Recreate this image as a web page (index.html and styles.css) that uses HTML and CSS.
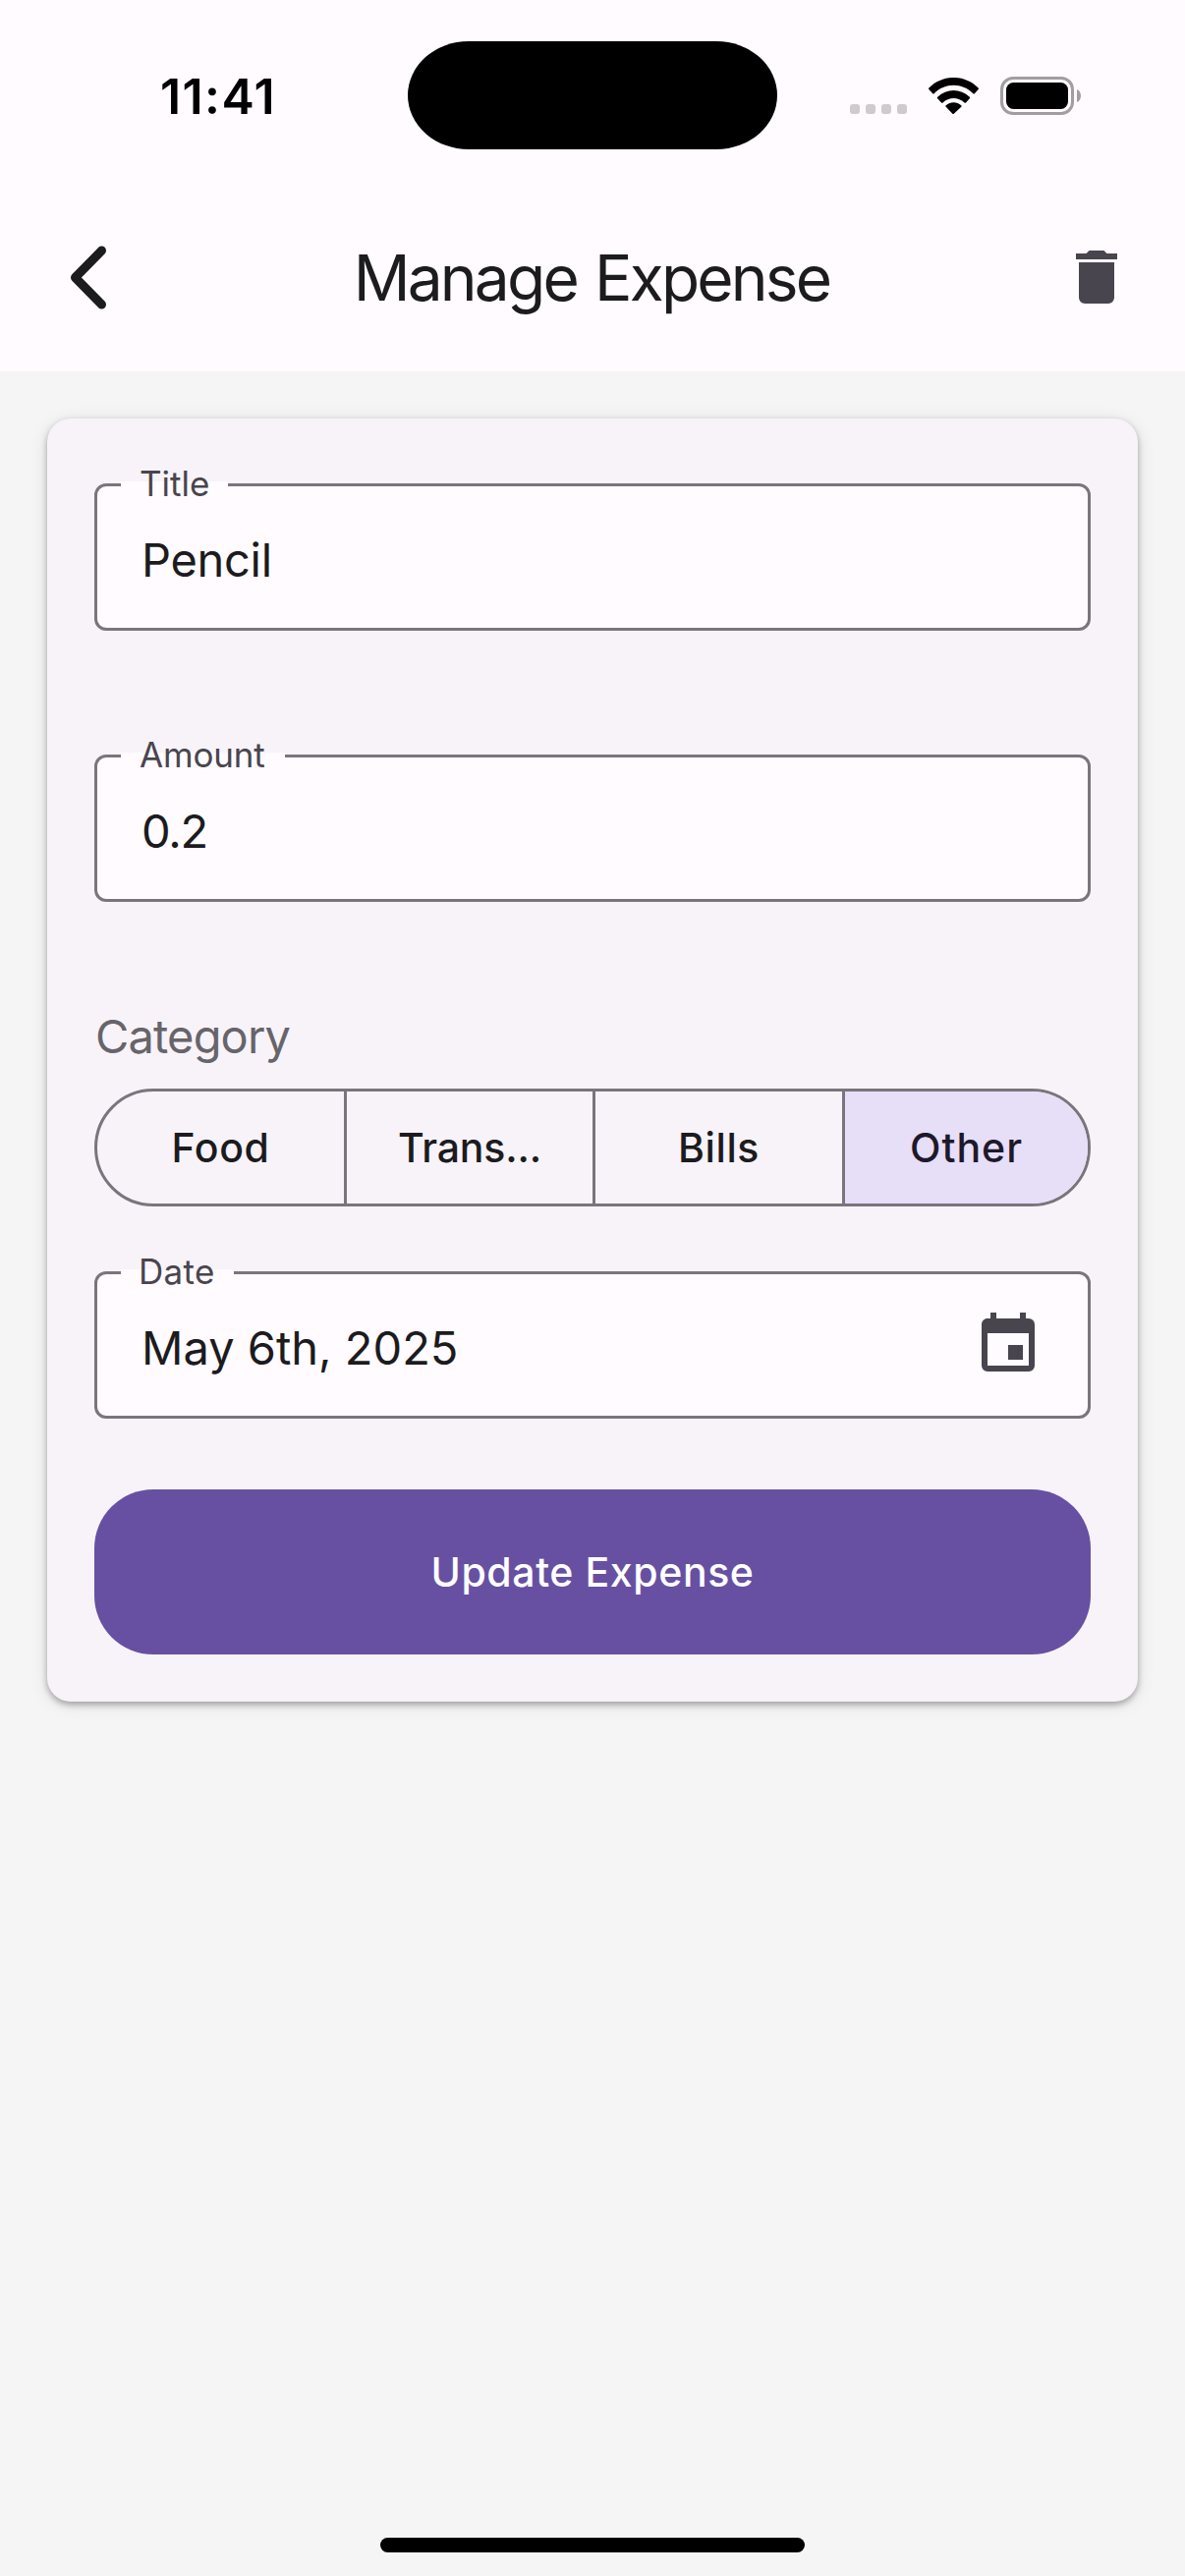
FILE: index.html
```html
<!DOCTYPE html>
<html lang="en">
<head>
<meta charset="utf-8">
<title>Manage Expense</title>
<link rel="stylesheet" href="styles.css">
</head>
<body>
<header class="header">
  <div class="status">
    <span class="status__time">11:41</span>
    <span class="status__island"></span>
    <div class="status__icons">
      <svg width="58" height="39" viewBox="0 0 58 39" fill="#cfcacf"><rect y="28" width="10" height="10" rx="3"/><rect x="16" y="28" width="10" height="10" rx="3"/><rect x="32" y="28" width="10" height="10" rx="3"/><rect x="48" y="28" width="10" height="10" rx="3"/></svg>
      <svg class="status__wifi" width="51" height="37" viewBox="0 -0.2 17 11.8" preserveAspectRatio="none"><path d="M8.5 2.3c2.47 0 4.84.95 6.63 2.65.13.13.35.13.48 0l1.28-1.3c.07-.07.1-.16.1-.25s-.04-.18-.1-.25c-4.67-4.48-12.1-4.48-16.77 0-.07.06-.1.16-.1.25s.04.18.1.25l1.29 1.3c.13.13.35.13.48 0C3.66 3.25 6.03 2.3 8.5 2.3zM8.5 6.5c1.35 0 2.66.5 3.67 1.4.14.13.35.13.49 0l1.28-1.3c.07-.07.1-.16.1-.26s-.04-.19-.11-.25c-3.06-2.85-7.8-2.85-10.86 0-.07.06-.11.16-.11.25s.04.19.1.26l1.29 1.3c.13.13.35.13.49 0 1.01-.9 2.31-1.4 3.66-1.4zM11.1 9.3c.07-.07.1-.16.1-.26 0-.1-.04-.19-.11-.25-1.5-1.26-3.68-1.26-5.18 0-.07.06-.11.15-.11.25s.04.19.1.26l2.22 2.24c.07.07.15.1.24.1s.18-.04.24-.1z"/></svg>
      <svg width="82" height="39" viewBox="0 0 82 39"><rect x="1.5" y="1.5" width="72" height="36" rx="11.5" fill="none" stroke="#a19da1" stroke-width="3"/><rect x="6" y="6" width="63" height="27" rx="7.5"/><path d="M78 13c5.300 2 5.300 11 0 13z" fill="#a19da1"/></svg>
    </div>
  </div>
  <div class="appbar">
    <svg width="54" height="72" viewBox="0 0 54 72" fill="none" stroke="#1c1b1e" stroke-width="9" stroke-linecap="round" stroke-linejoin="round"><path d="M49.500 9L22.500 36.500 49.500 64"/></svg>
    <h1 class="appbar__title">Manage Expense</h1>
    <svg width="72" height="72" viewBox="0 0 24 24" fill="#49454e"><path d="M19 4h-3.500l-1-1h-5l-1 1H5v2h14M6 19a2 2 0 0 0 2 2h8a2 2 0 0 0 2-2V7H6z"/></svg>
  </div>
</header>
<main class="content">
  <form class="card">
    <div class="field">
      <span class="field__label">Title</span>
      <span class="field__value field__value--title">Pencil</span>
    </div>
    <div class="field field--amount">
      <span class="field__label field__label--amount">Amount</span>
      <span class="field__value field__value--amount">0.2</span>
    </div>
    <div class="category">Category</div>
    <div class="segments">
      <span class="segment">Food</span>
      <span class="segment segment--transport">Trans...</span>
      <span class="segment">Bills</span>
      <span class="segment segment--selected">Other</span>
    </div>
    <div class="field field--date">
      <span class="field__label field__label--date">Date</span>
      <span class="field__value field__value--date">May 6th, 2025</span>
      <svg class="field__icon" width="72" height="72" viewBox="0 0 24 24" fill="#49454e"><path d="M19 19H5V8h14m-3-7v2H8V1H6v2H5c-1.110 0-2 .89-2 2v14a2 2 0 0 0 2 2h14a2 2 0 0 0 2-2V5a2 2 0 0 0-2-2h-1V1m-1 11h-5v5h5z"/></svg>
    </div>
    <div class="button">Update Expense</div>
  </form>
</main>
<div class="home"></div>
</body>
</html>
```
FILE: styles.css
```css
* {
  box-sizing: border-box;
}

body {
  margin: 0;
  height: 2622px;
  display: flex;
  flex-direction: column;
  background: #f5f5f5;
  color: #1c1b1e;
  font-family: Inter, "Liberation Sans", sans-serif;
}

svg {
  display: block;
  flex: none;
}

/* Status bar and app bar */
.header {
  height: 378px;
  background: #fffbff;
}

.status {
  height: 186px;
  display: grid;
  grid-template-columns: 415px 450px 1fr;
  color: #000;
}

.status__time {
  padding: 68px 0 0 163px;
  font-size: 50px;
  font-weight: 600;
  line-height: 60px;
  letter-spacing: 1.4px;
}

.status__island {
  width: 376px;
  height: 110px;
  margin-top: 42px;
  border-radius: 62px / 55px;
  background: #000;
}

.status__icons {
  display: flex;
  gap: 22px;
  padding-top: 78px;
}

.status__wifi {
  margin-top: 1px;
}

.appbar {
  height: 192px;
  display: flex;
  align-items: center;
  justify-content: space-between;
  padding: 0 54px;
}

.appbar__title {
  margin: 0;
  padding: 1px 0 0 16px;
  font-size: 64px;
  font-weight: 400;
  line-height: 84px;
  letter-spacing: -2.8px;
  word-spacing: 3px;
}

/* Form card */
.content {
  flex: 1;
  padding: 48px;
}

.card {
  padding: 66px 48px 48px;
  border-radius: 24px;
  background: #f7f3f9;
  box-shadow: 0 3px 6px rgba(0, 0, 0, 0.3), 0 3px 18px rgba(0, 0, 0, 0.1);
}

.field {
  position: relative;
  height: 150px;
  display: flex;
  align-items: center;
  padding: 6px 45px 0;
  border: 3px solid #7a757c;
  border-radius: 12px;
  background: #fffbff;
}

.field--amount {
  margin-top: 126px;
}

.field--date {
  margin-top: 66px;
}

.field__label {
  position: absolute;
  top: -27px;
  left: 24px;
  padding: 0 19px;
  background: linear-gradient(transparent 22px, #fffbff 22px);
  color: #49454e;
  font-size: 35px;
  line-height: 48px;
}

.field__label--amount {
  padding-right: 21px;
  letter-spacing: -0.2px;
}

.field__label--date {
  padding: 0 19px 0 18px;
  letter-spacing: 0.3px;
}

.field__value {
  flex: 1;
  font-size: 47px;
  line-height: 60px;
  letter-spacing: -0.3px;
}

.field__value--amount {
  letter-spacing: -1.2px;
}

.field__value--date {
  letter-spacing: 0;
}

.field__icon {
  margin-top: -6px;
}

.category {
  margin: 101px 0 17px 1px;
  color: #67646a;
  font-size: 47px;
  line-height: 72px;
  letter-spacing: -0.85px;
}

.segments {
  height: 120px;
  display: grid;
  grid-template-columns: 254px 253px 254px 1fr;
  overflow: hidden;
  border: 3px solid #7a757c;
  border-radius: 60px;
  font-size: 41px;
  font-weight: 500;
  letter-spacing: 0.6px;
}

.segment {
  display: flex;
  align-items: center;
  justify-content: center;
  border-right: 3px solid #7a757c;
}

.segment--transport {
  letter-spacing: -0.15px;
}

.segment--selected {
  border-right: 0;
  background: #e7def7;
  color: #1d192b;
  letter-spacing: 1px;
}

.button {
  height: 168px;
  margin-top: 72px;
  display: flex;
  align-items: center;
  justify-content: center;
  border-radius: 60px;
  background: #6750a2;
  color: #fff;
  font-size: 41px;
  font-weight: 500;
  letter-spacing: 0.6px;
}

/* Home indicator */
.home {
  width: 432px;
  height: 15px;
  margin: 0 auto 24px;
  border-radius: 8px;
  background: #000;
}
```
